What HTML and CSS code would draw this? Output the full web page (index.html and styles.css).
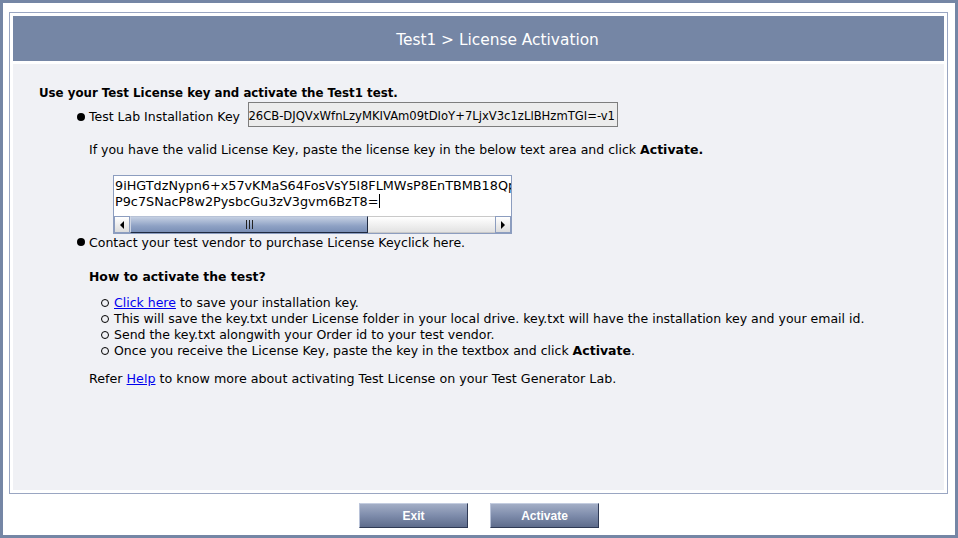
FILE: index.html
```html
<!DOCTYPE html>
<html>
<head>
<meta charset="utf-8">
<link rel="stylesheet" href="styles.css">
</head>
<body>
<div class="window">
  <div class="panel">
    <div class="title">Test1 &gt; License Activation</div>
    <div class="content">
      <div class="heading">Use your Test License key and activate the Test1 test.</div>
      <div class="row install">
        <span class="disc"></span>
        <span class="label">Test Lab Installation Key</span>
        <div class="keybox"><span>26CB-DJQVxWfnLzyMKIVAm09tDIoY+7LjxV3c1zLlBHzmTGI=-v1</span></div>
      </div>
      <div class="line info">If you have the valid License Key, paste the license key in the below text area and click <b>Activate.</b></div>
      <div class="textarea">
        <div class="ta-text">
          <div>9iHGTdzNypn6+x57vKMaS64FosVsY5l8FLMWsP8EnTBMB18Qp</div>
          <div>P9c7SNacP8w2PysbcGu3zV3gvm6BzT8=<span class="caret"></span></div>
        </div>
        <div class="hscroll">
          <div class="sbtn"><span class="tri-left"></span></div>
          <div class="thumb"><span class="grip"></span></div>
          <div class="track"></div>
          <div class="sbtn"><span class="tri-right"></span></div>
        </div>
      </div>
      <div class="row contact">
        <span class="disc"></span>
        <span class="label">Contact your test vendor to purchase License Keyclick here.</span>
      </div>
      <div class="line how">How to activate the test?</div>
      <ul class="steps">
        <li><span class="ring"></span><span><a href="#">Click here</a> to save your installation key.</span></li>
        <li><span class="ring"></span><span>This will save the key.txt under License folder in your local drive. key.txt will have the installation key and your email id.</span></li>
        <li><span class="ring"></span><span>Send the key.txt alongwith your Order id to your test vendor.</span></li>
        <li><span class="ring"></span><span>Once you receive the License Key, paste the key in the textbox and click <b>Activate</b>.</span></li>
      </ul>
      <div class="line refer">Refer <a href="#">Help</a> to know more about activating Test License on your Test Generator Lab.</div>
    </div>
  </div>
  <div class="buttons">
    <button class="btn">Exit</button>
    <button class="btn">Activate</button>
  </div>
</div>
</body>
</html>
```
FILE: styles.css
```css
html, body {
  margin: 0;
  padding: 0;
}
body {
  background: #7586a5;
  width: 958px;
  height: 538px;
  overflow: hidden;
  font-family: "DejaVu Sans", Verdana, sans-serif;
  font-size: 12.5px;
  color: #000;
}
.window {
  margin: 3px;
  width: 952px;
  height: 532px;
  background: #fff;
  padding: 9px 0 0 6px;
  box-sizing: border-box;
}
.panel {
  width: 939px;
  height: 482px;
  border: 1px solid #9aa6c2;
  box-sizing: border-box;
  padding: 3px;
  display: flex;
  flex-direction: column;
}
.title {
  height: 45px;
  flex: none;
  box-sizing: border-box;
  background: #7586a5;
  color: #fff;
  font-size: 15.4px;
  display: flex;
  align-items: center;
  justify-content: center;
  padding: 3px 0 0 38px;
}
.content {
  margin-top: 3px;
  flex: 1;
  background: #f0f1f5;
  padding: 19px 0 0 26px;
}
.heading {
  font-weight: bold;
  font-size: 11.8px;
  line-height: 16px;
  height: 15px;
  padding-top: 2px;
}
.line {
  line-height: 16px;
  height: 16px;
  padding-left: 50px;
  white-space: nowrap;
}
.row {
  display: flex;
  align-items: center;
  padding-left: 38px;
  white-space: nowrap;
}
.disc {
  width: 8px;
  height: 8px;
  border-radius: 50%;
  background: #000;
  margin-right: 4px;
  flex: none;
}
.install {
  margin-top: 2px;
  height: 25px;
}
.install .disc {
  margin-top: 4px;
}
.install .label {
  margin-right: 8px;
  padding-top: 4px;
}
.keybox {
  width: 370px;
  height: 25px;
  box-sizing: border-box;
  border: 1px solid #7d7d7d;
  background: #ececec;
  display: flex;
  align-items: center;
  justify-content: flex-end;
  overflow: hidden;
  white-space: nowrap;
  padding: 2px 2px 0 0;
  font-size: 11.6px;
}
.info {
  margin-top: 15px;
}
.textarea {
  margin: 17px 0 0 74px;
  width: 399px;
  height: 59px;
  box-sizing: border-box;
  border: 1px solid #8c9dbf;
  background: #fff;
  display: flex;
  flex-direction: column;
}
.ta-text {
  flex: 1;
  padding: 2px 0 0 1px;
  line-height: 16px;
  white-space: nowrap;
  overflow: hidden;
  font-size: 12.8px;
}
.caret {
  display: inline-block;
  width: 1px;
  height: 14px;
  background: #000;
  vertical-align: -2px;
  margin-left: 1px;
}
.hscroll {
  height: 17px;
  display: flex;
  flex: none;
}
.sbtn {
  width: 16px;
  height: 17px;
  box-sizing: border-box;
  border: 1px solid #8c9dbf;
  background: linear-gradient(#ffffff, #dcdcdc);
  display: flex;
  align-items: center;
  justify-content: center;
  flex: none;
}
.tri-left {
  width: 0;
  height: 0;
  border-top: 4px solid transparent;
  border-bottom: 4px solid transparent;
  border-right: 4px solid #000;
}
.tri-right {
  width: 0;
  height: 0;
  border-top: 4px solid transparent;
  border-bottom: 4px solid transparent;
  border-left: 4px solid #000;
}
.thumb {
  width: 238px;
  box-sizing: border-box;
  border: 1px solid #1f2a40;
  border-left-color: #cfd6e4;
  border-top-color: #b7c2d6;
  background: linear-gradient(#c5d0e3, #8ea1c4 60%, #7a8fb6);
  display: flex;
  align-items: center;
  justify-content: center;
  flex: none;
}
.grip {
  width: 7px;
  height: 9px;
  background: repeating-linear-gradient(90deg, #222 0, #222 1px, transparent 1px, transparent 3px);
}
.track {
  flex: 1;
  background: linear-gradient(#ffffff, #e2e2e2);
  border-top: 1px solid #c9c9c9;
  border-bottom: 1px solid #c9c9c9;
}
.contact {
  height: 16px;
}
.how {
  margin-top: 19px;
  font-weight: bold;
  font-size: 12.4px;
}
.steps {
  list-style: none;
  margin: 10px 0 0 0;
  padding: 0 0 0 62px;
}
.steps li {
  display: flex;
  align-items: center;
  line-height: 16px;
  height: 16px;
  white-space: nowrap;
}
.ring {
  width: 8px;
  height: 8px;
  border: 1px solid #000;
  border-radius: 50%;
  box-sizing: border-box;
  margin-right: 5px;
  flex: none;
}
.refer {
  margin-top: 12px;
  font-size: 12.7px;
}
a {
  color: #0000ee;
  text-decoration: underline;
}
.buttons {
  display: flex;
  justify-content: center;
  gap: 22px;
  margin-top: 9px;
  padding-right: 6px;
}
.btn {
  width: 109px;
  height: 25px;
  border: 1px solid #2f3a55;
  border-left-color: #b8c2d8;
  border-top-color: #c4cde0;
  background: linear-gradient(#a3aec6, #7e8cab 50%, #5e6c8c);
  color: #fff;
  font-family: "Liberation Sans", Arial, sans-serif;
  font-weight: bold;
  font-size: 12px;
  padding: 0;
}
```
